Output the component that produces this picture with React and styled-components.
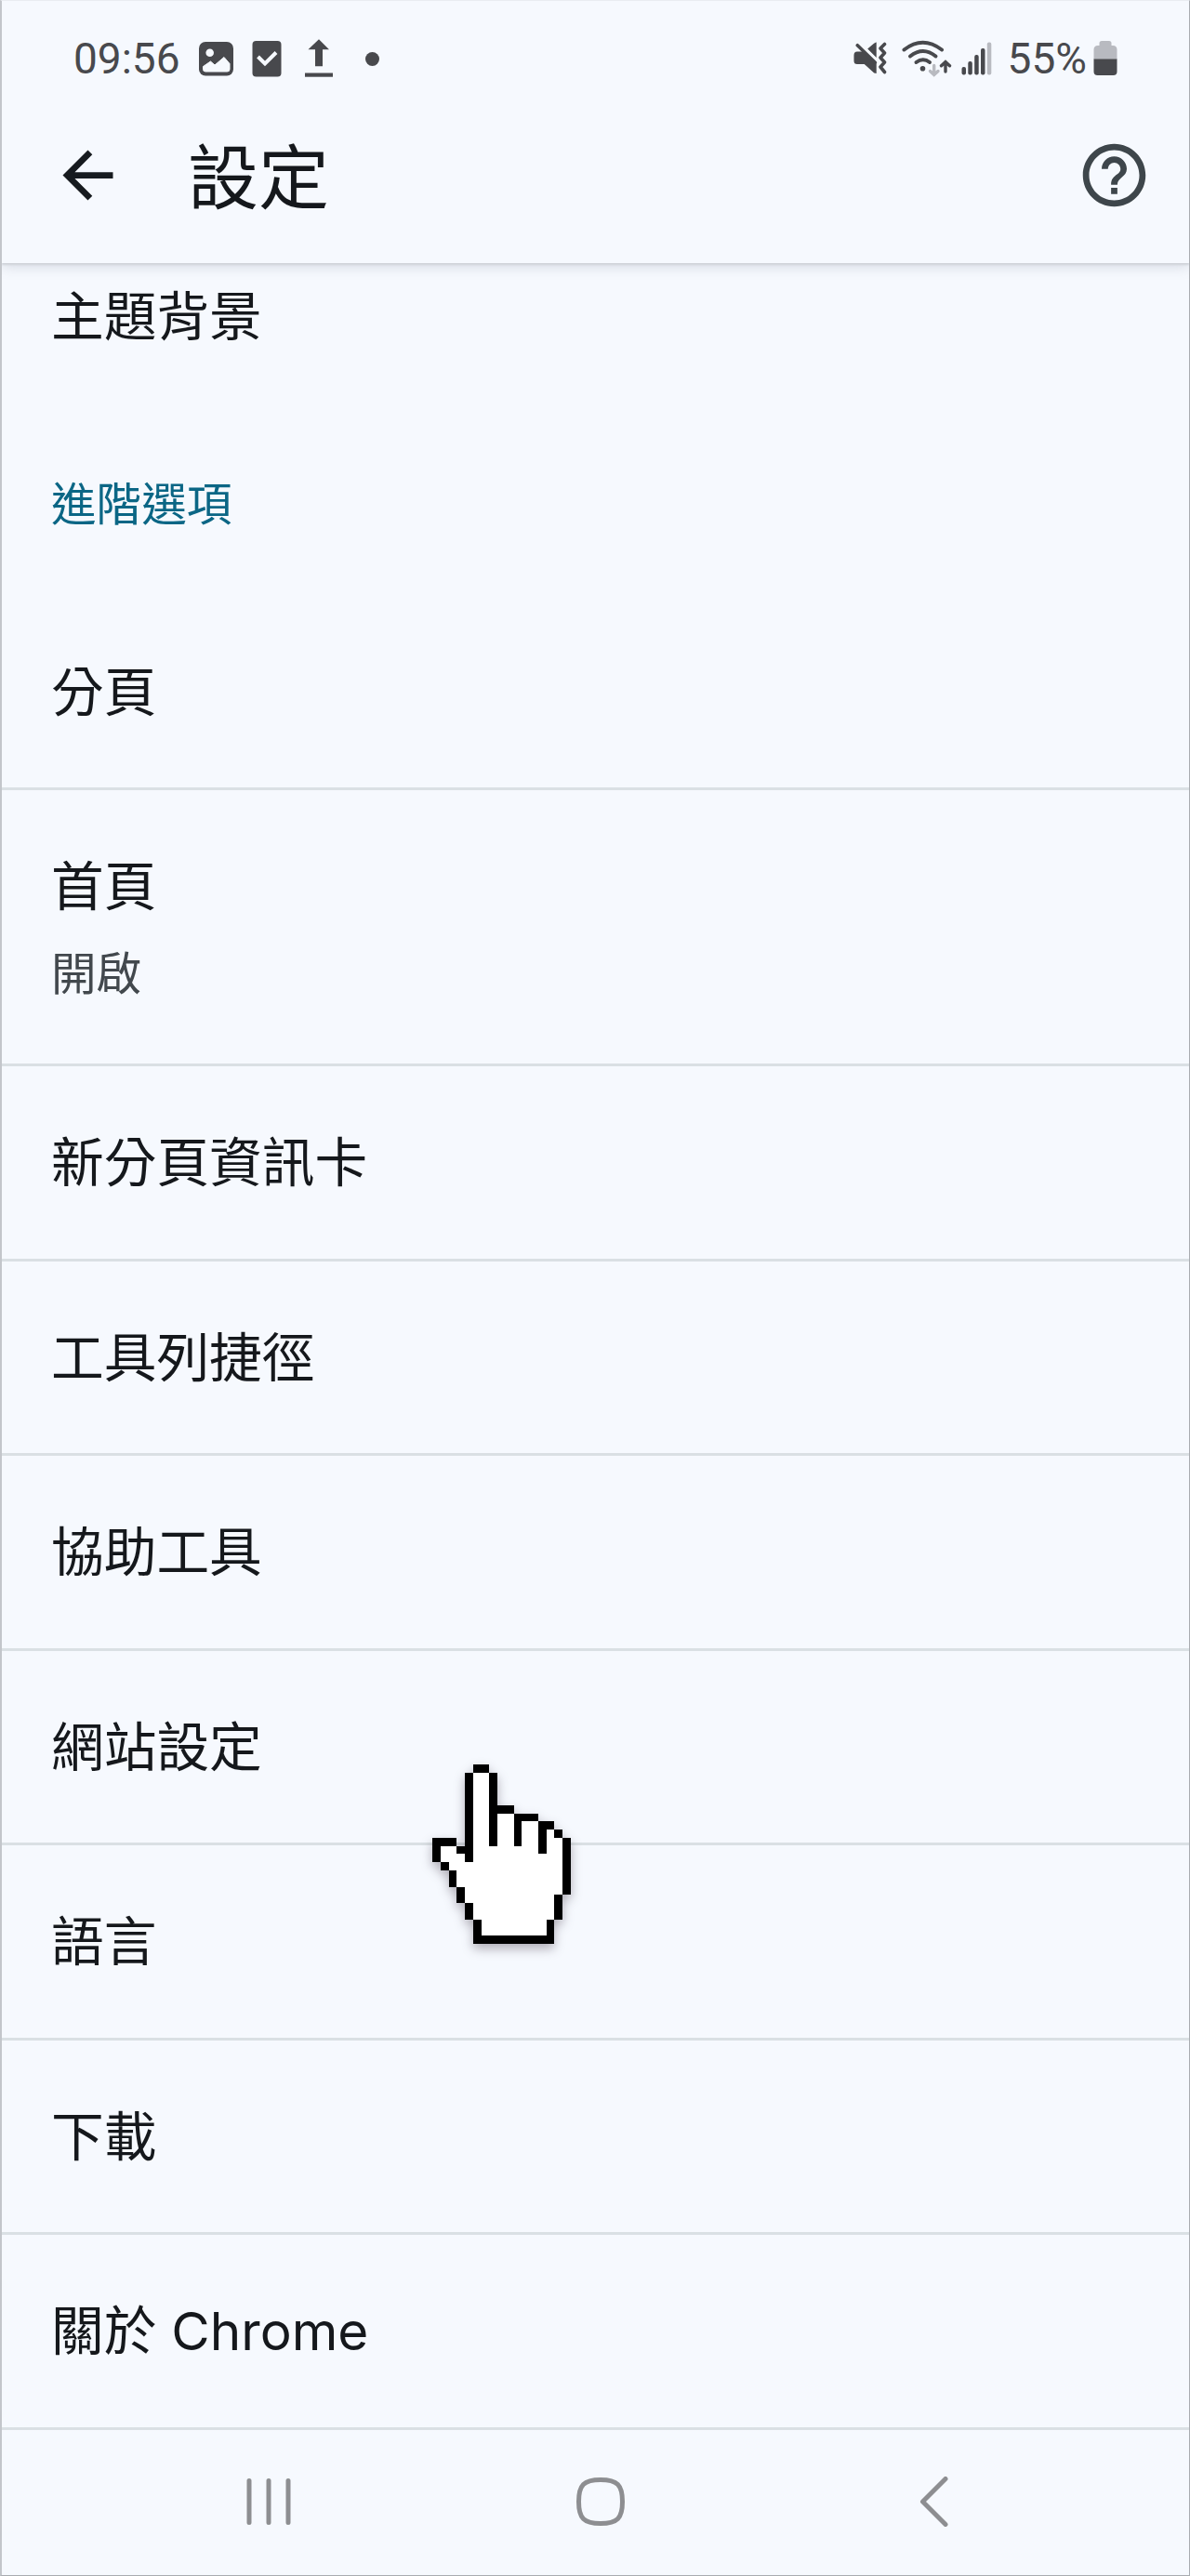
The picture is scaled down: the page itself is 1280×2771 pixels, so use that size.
import React from "react";
import styled, { createGlobalStyle } from "styled-components";
import { MdArrowBack, MdHelpOutline } from "react-icons/md";

const rows = [
  { title: "分頁" },
  { title: "首頁", summary: "開啟" },
  { title: "新分頁資訊卡" },
  { title: "工具列捷徑" },
  { title: "協助工具" },
  { title: "網站設定", pointer: true },
  { title: "語言" },
  { title: "下載" },
  { title: "關於 Chrome" },
];

function NotificationIcons() {
  return (
    <>
      <Icon $left={19} width="38" height="38" viewBox="212 44 38 38">
        <rect x="213" y="45" width="37" height="36.5" rx="7" fill="#48494d" />
        <circle cx="224.7" cy="56.7" r="4.3" fill="#f6f9fe" />
        <path
          d="M217.500 71.500l8-5.500 4.500 4 10-8.500 6 7v6q0 2.500-2.500 2.500h-23.500q-2.500 0-2.500-2.500z"
          fill="#f6f9fe"
          stroke="#f6f9fe"
          strokeLinejoin="round"
        />
      </Icon>
      <Icon $left={20} width="32" height="40" viewBox="271 43 32 40">
        <rect x="271.500" y="44" width="31" height="38.500" rx="4" fill="#48494d" />
        <path d="M277.500 61l7.500 7.500 12-12" fill="none" stroke="#f6f9fe" strokeWidth="4" />
      </Icon>
      <Icon $left={25} width="30" height="42" viewBox="328 43 30 42">
        <path d="M343 43.300l11 11h-7v18h-8v-18h-7.500z" fill="#48494d" />
        <rect x="328" y="79.500" width="30" height="4.200" fill="#48494d" />
      </Icon>
      <Dot />
    </>
  );
}

function SystemIcons() {
  return (
    <>
      <Icon width="36" height="38" viewBox="918 44 36 38">
        <g fill="#48494d">
          <path d="M942.700 45.500v16.500l-9.500-9.500 6.500-5.500q2-1.800 3-1.500z" />
          <path d="M922 55.500h6l14.700 13v10.500l-2.500-.5-10.500-9.500h-7.700q-3.500 0-3.500-3.500v-6q0-4 3.500-4z" />
        </g>
        <path d="M925 47.500l22 21" stroke="#f6f9fe" strokeWidth="2.500" />
        <path
          d="M922.300 48.700l19 18.500M951.500 47.500l-4.500 4.500 4.500 5-4.500 5 4.500 5-4.500 5 4.500 5.500"
          fill="none"
          stroke="#48494d"
          strokeWidth="3.600"
          strokeLinecap="round"
          strokeLinejoin="round"
        />
      </Icon>
      <Icon $left={16} width="54" height="40" viewBox="970 42 54 40">
        <g fill="none" stroke="#48494d" strokeWidth="4" strokeLinecap="round">
          <path d="M972.500 52.500q20-15.500 40.500 0" />
          <path d="M979 59.500q14-11 27.500 0" />
          <path d="M985.500 66q7.500-5.500 14.500 0" />
          <path d="M1017 76v-10.500M1012.500 69.800l4.500-4.300 4.500 4.300" strokeWidth="3.400" />
          <path
            d="M1004.700 69.500v9.500M1000.500 75.500l4.200 4 4.300-4"
            stroke="#b8bac0"
            strokeWidth="3.400"
          />
        </g>
        <circle cx="992.500" cy="72.800" r="2.800" fill="#48494d" />
      </Icon>
      <Icon $left={10} width="34" height="36" viewBox="1034 44 34 36">
        <g fill="#48494d">
          <rect x="1034.500" y="71" width="4.500" height="8.500" rx="2" />
          <rect x="1041.300" y="65" width="4.500" height="14.500" rx="2" />
          <rect x="1048.200" y="58" width="4.500" height="21.500" rx="2" />
          <rect x="1055" y="51" width="4.500" height="28.500" rx="2" />
        </g>
        <rect x="1061.800" y="44.500" width="4.500" height="35" rx="2" fill="#b8bac0" />
      </Icon>
      <StatusText $left={16}>55%</StatusText>
      <Icon $left={7} width="26" height="38" viewBox="1176 44 26 38">
        <path
          d="M1182.500 49v-2.500q0-2.500 2.500-2.500h8q2.500 0 2.500 2.500v2.500h1.500q4.500 0 4.500 4.500v10.500h-25v-10.500q0-4.500 4.500-4.500z"
          fill="#b8bac0"
        />
        <path d="M1176.500 63.500h25v13.500q0 4-4 4h-17q-4 0-4-4z" fill="#48494d" />
      </Icon>
    </>
  );
}

// 17 x 22 grid hand cursor
function HandPointer() {
  return (
    <Pointer viewBox="0 0 17 22" shapeRendering="crispEdges">
      <path
        d="M5 1H8V6H10V7H13V8H15V9H16V16H15V19H14V21H6V19H5V17H4V15H3V13H2V12H1V10H3V11H5Z"
        fill="#fff"
      />
      <path d="M5 0h2v1h-2zM4 1h1v11h-1zM7 1h1v9h-1zM8 5h2v1h-2zM10 6h3v1h-3zM10 6h1v4h-1zM13 7h2v1h-2zM13 7h1v4h-1zM15 8h1v1h-1zM16 9h1v7h-1zM15 16h1v3h-1zM14 19h1v3h-1zM5 21h10v1h-10zM5 19h1v3h-1zM4 17h1v2h-1zM3 15h1v2h-1zM2 13h1v2h-1zM1 12h1v1h-1zM0 9h1v3h-1zM0 9h3v1h-3zM3 10h1v1h-1z" />
    </Pointer>
  );
}

export default function App() {
  return (
    <Screen>
      <GlobalStyle />
      <StatusBar>
        <Group>
          <StatusText>09:56</StatusText>
          <NotificationIcons />
        </Group>
        <Group>
          <SystemIcons />
        </Group>
      </StatusBar>
      <AppBar>
        <MdArrowBack size={81} color="#171b1f" />
        <h1>設定</h1>
        <MdHelpOutline size={81} color="#3e464b" />
      </AppBar>
      <List>
        <ThemeRow>
          <Title>主題背景</Title>
        </ThemeRow>
        <SectionTitle>進階選項</SectionTitle>
        {rows.map((row) => (
          <Row key={row.title} $tall={Boolean(row.summary)}>
            <Title>{row.title}</Title>
            {row.summary && <Summary>{row.summary}</Summary>}
            {row.pointer && <HandPointer />}
          </Row>
        ))}
      </List>
      <NavBar>
        <svg width="48" height="52" viewBox="0 0 48 52">
          <path d="M3 3.500v45M24 3.500v45M45 3.500v45" />
        </svg>
        <svg width="54" height="54" viewBox="0 0 54 54">
          <path d="M27 3.500C45 3.500 50.500 9 50.500 27S45 50.500 27 50.500 3.500 45 3.500 27 9 3.500 27 3.500z" />
        </svg>
        <svg width="31" height="54" viewBox="0 0 31 54">
          <path d="M28 2.500L3.500 27 28 51.500" />
        </svg>
      </NavBar>
    </Screen>
  );
}

const GlobalStyle = createGlobalStyle`
  * {
    box-sizing: border-box;
  }
  body {
    margin: 0;
    background: #f6f9fe;
  }
`;

const Screen = styled.div`
  width: 1280px;
  height: 2771px;
  display: flex;
  flex-direction: column;
  overflow: hidden;
  background: #f6f9fe;
  border: 1px solid #a9acb1;
  border-left: 2px solid #c3c6cb;
  border-top-color: #e9ecf1;
  color: #15181c;
  font-family: Inter, "Noto Sans CJK TC", sans-serif;
`;

const StatusBar = styled.div`
  height: 124px;
  flex: none;
  display: flex;
  justify-content: space-between;
  align-items: center;
  padding: 0 77px 0 77px;
`;

const Group = styled.div`
  display: flex;
  align-items: center;
`;

const Icon = styled.svg`
  display: block;
  flex: none;
  margin-left: ${(p) => p.$left || 0}px;
`;

const Dot = styled.span`
  width: 15px;
  height: 15px;
  margin-left: 35px;
  border-radius: 50%;
  background: #48494d;
`;

const StatusText = styled.span`
  margin-left: ${(p) => p.$left || 0}px;
  font-family: Roboto, sans-serif;
  font-size: 46px;
  line-height: 54px;
  color: #48494d;
`;

const AppBar = styled.header`
  height: 158px;
  flex: none;
  display: flex;
  align-items: center;
  padding: 0 40px 31px 52px;
  position: relative;
  z-index: 1;
  box-shadow: 0 2px 2px #cfd3d9, 0 3px 14px rgba(100, 110, 125, 0.24);
  clip-path: inset(0 0 -20px 0);
  background: #f6f9fe;
  h1 {
    flex: 1;
    margin: 5px 0 0 67px;
    font-size: 76px;
    font-weight: 400;
    line-height: 90px;
  }
`;

const List = styled.main`
  flex: none;
`;

const Row = styled.div`
  position: relative;
  height: ${(p) => (p.$tall ? 297 : 209.5)}px;
  display: flex;
  flex-direction: column;
  justify-content: center;
  gap: 16px;
  padding-left: 53px;
  padding-top: ${(p) => (p.$tall ? 6 : 2)}px;
  border-bottom: 3px solid #dae0e4;
`;

const ThemeRow = styled.div`
  height: 161px;
  padding: 18px 0 0 53px;
`;

const Title = styled.div`
  font-size: 56.700px;
  line-height: 80px;
`;

const Summary = styled.div`
  font-size: 48.600px;
  line-height: 76px;
  color: #42484d;
`;

const SectionTitle = styled.h2`
  height: 196.5px;
  margin: 0;
  padding-left: 53px;
  font-size: 48.600px;
  font-weight: 400;
  line-height: 197px;
  color: #0b6685;
`;

const Pointer = styled.svg`
  position: absolute;
  z-index: 2;
  left: 463px;
  top: 122px;
  width: 149px;
  height: 193px;
  filter: drop-shadow(0 5px 6px rgba(40, 30, 45, 0.35));
`;

const NavBar = styled.nav`
  flex: 1;
  display: flex;
  align-items: center;
  padding: 0 0 1px 263px;
  svg {
    fill: none;
    stroke: #8d8e91;
    stroke-width: 5;
    stroke-linecap: round;
    stroke-linejoin: round;
  }
  svg:nth-child(2) {
    margin: 0 316px 0 306px;
  }
`;
